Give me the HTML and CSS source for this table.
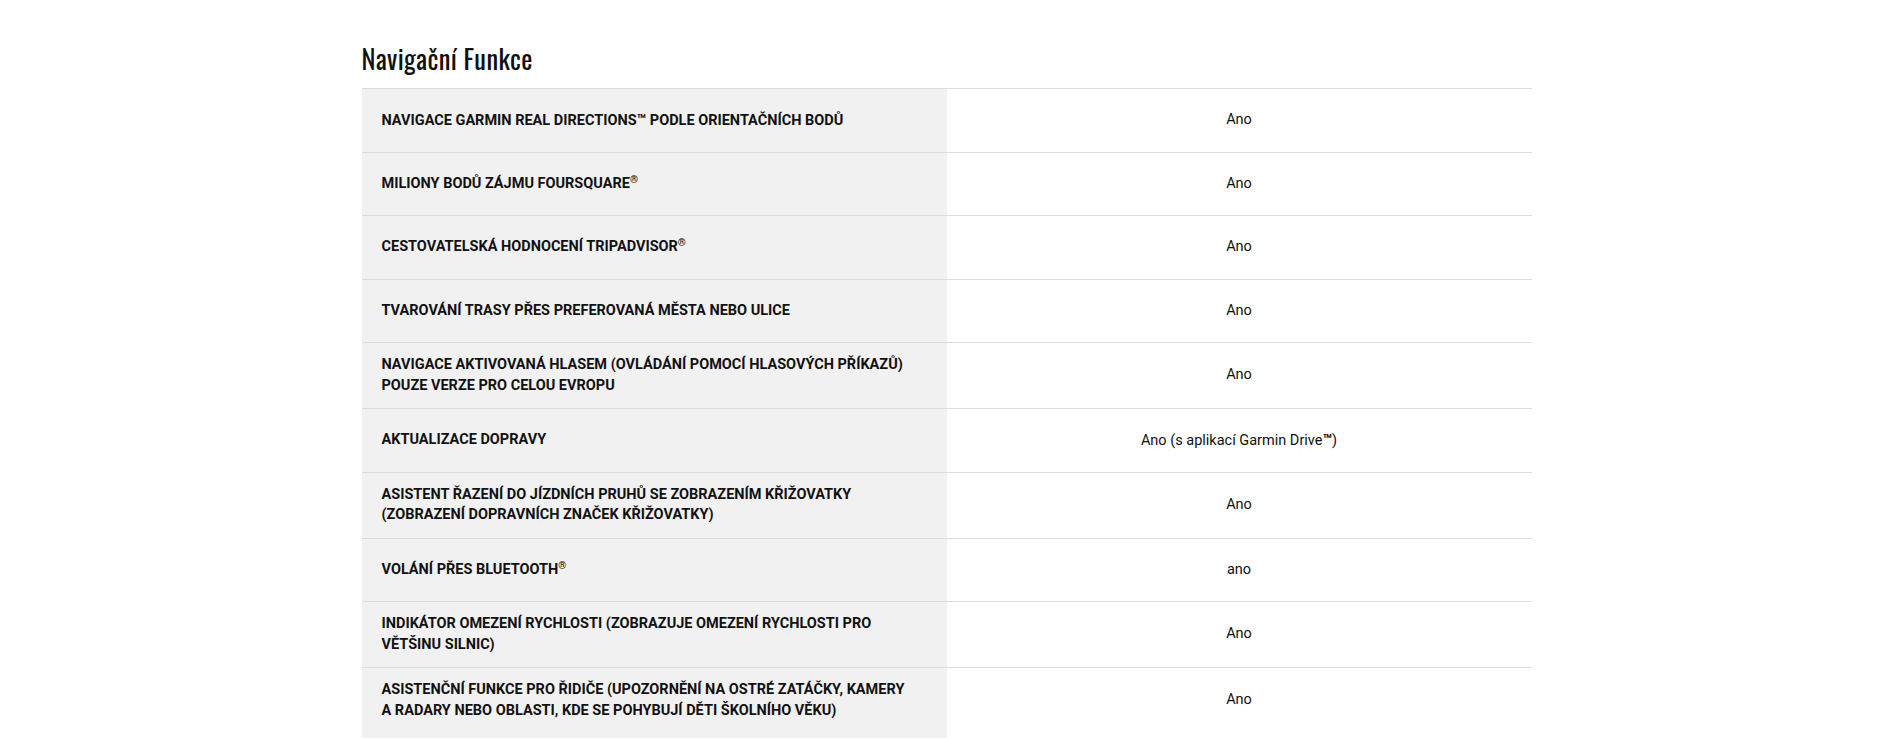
FILE: index.html
```html
<!DOCTYPE html>
<html lang="cs">
<head>
<meta charset="utf-8">
<title>Navigační Funkce</title>
<link rel="stylesheet" href="styles.css">
</head>
<body>
<main class="specs">
  <h2 class="specs-title">Navigační Funkce</h2>
  <table class="spec-table">
    <tbody>
      <tr><th>Navigace Garmin Real Directions<span class="tm">™</span> podle orientačních bodů</th><td>Ano</td></tr>
      <tr><th>Miliony bodů zájmu Foursquare<sup class="reg">®</sup></th><td>Ano</td></tr>
      <tr><th>Cestovatelská hodnocení TripAdvisor<sup class="reg">®</sup></th><td>Ano</td></tr>
      <tr><th>Tvarování trasy přes preferovaná města nebo ulice</th><td>Ano</td></tr>
      <tr><th>Navigace aktivovaná hlasem (ovládání pomocí hlasových příkazů)<br>pouze verze pro celou Evropu</th><td>Ano</td></tr>
      <tr><th>Aktualizace dopravy</th><td>Ano (s aplikací Garmin Drive<span class="tm bold">™</span>)</td></tr>
      <tr><th>Asistent řazení do jízdních pruhů se zobrazením křižovatky<br>(zobrazení dopravních značek křižovatky)</th><td>Ano</td></tr>
      <tr><th>Volání přes Bluetooth<sup class="reg">®</sup></th><td>ano</td></tr>
      <tr><th>Indikátor omezení rychlosti (zobrazuje omezení rychlosti pro<br>většinu silnic)</th><td>Ano</td></tr>
      <tr class="last"><th>Asistenční funkce pro řidiče (upozornění na ostré zatáčky, kamery<br>a radary nebo oblasti, kde se pohybují děti školního věku)</th><td>Ano</td></tr>
    </tbody>
  </table>
</main>
</body>
</html>
```
FILE: styles.css
```css
html, body {
  margin: 0;
  padding: 0;
  background: #ffffff;
}
body {
  font-family: Roboto, "Liberation Sans", Arial, sans-serif;
  color: #111111;
}
.specs {
  width: 1170px;
  margin: 0 auto;
  padding-top: 41px;
}
.specs-title {
  font-family: Oswald, "Liberation Sans Narrow", "DejaVu Sans Condensed", sans-serif;
  font-weight: 400;
  font-size: 26.5px;
  line-height: 35px;
  letter-spacing: 0.4px;
  margin: 0 0 12px 0;
  color: #111111;
}
.spec-table {
  width: 100%;
  border-collapse: collapse;
  border-top: 1px solid #dcdcdc;
}
.spec-table tr {
  border-bottom: 1px solid #dcdcdc;
}
.spec-table tr.last {
  border-bottom: 0;
}
.spec-table tr.last th,
.spec-table tr.last td {
  padding-bottom: 17px;
}
.spec-table th {
  width: 50%;
  height: 38.5px;
  background: #f1f1f1;
  text-align: left;
  font-weight: 700;
  font-size: 14.5px;
  line-height: 20.5px;
  text-transform: uppercase;
  padding: 12px 20px;
  vertical-align: middle;
  color: #111111;
}
.spec-table td {
  width: 50%;
  text-align: center;
  font-weight: 400;
  font-size: 14.5px;
  line-height: 20.5px;
  padding: 12px 20px;
  vertical-align: middle;
  color: #111111;
}
.tm {
  font-size: 1.05em;
}
.tm.bold {
  font-weight: 700;
}
.reg {
  font-size: 0.7em;
  line-height: 0;
  vertical-align: 0.45em;
}
```
